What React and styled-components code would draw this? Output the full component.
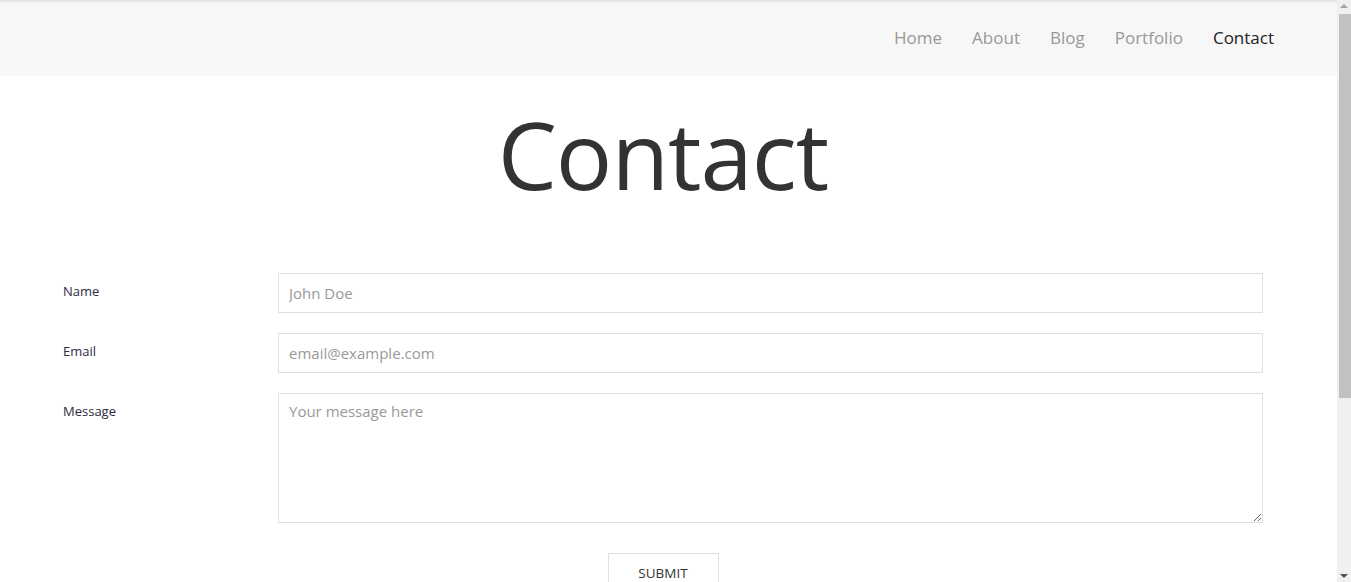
import React from "react";
import styled, { createGlobalStyle } from "styled-components";

const Global = createGlobalStyle`
  html, body { margin: 0; padding: 0; background: #fff; }
  body { font-family: "Open Sans", "Noto Sans", sans-serif; color: #333; padding-right: 14px; }
  * { box-sizing: border-box; }
`;

const Scrollbar = styled.div`
  position: fixed;
  top: 0;
  right: 0;
  bottom: 0;
  width: 14px;
  background: #f0f0f0;
  display: flex;
  flex-direction: column;
  align-items: stretch;
`;

const Arrow = styled.div`
  height: 12px;
  display: flex;
  align-items: center;
  justify-content: center;
  &::before {
    content: "";
    border-left: 4px solid transparent;
    border-right: 4px solid transparent;
    ${(p) =>
      p.$down
        ? "border-top: 4px solid #505050;"
        : "border-bottom: 4px solid #a3a3a3;"}
  }
`;

const Thumb = styled.div`
  margin: 2px 0 0 2px;
  height: 384px;
  background: #c1c1c1;
`;

const Track = styled.div`
  flex: 1;
`;

const NavBar = styled.header`
  height: 76px;
  background: #f7f7f7;
  border-top: 2px solid #e6e6e6;
  display: flex;
  align-items: center;
  justify-content: flex-end;
  padding: 0 63px 3px 0;
`;

const NavList = styled.nav`
  display: flex;
  gap: 30px;
`;

const NavLink = styled.a`
  font-size: 17px;
  color: ${(p) => (p.$active ? "#222" : "#999")};
  text-decoration: none;
  cursor: pointer;
`;

const Main = styled.main`
  padding: 0 74px 60px 63px;
`;

const Title = styled.h1`
  margin: 22px 0 62px;
  text-align: center;
  font-size: 94px;
  font-weight: 400;
  line-height: 1.2;
  color: #333;
  letter-spacing: -1px;
`;

const Form = styled.form`
  display: flex;
  flex-direction: column;
  gap: 20px;
`;

const Row = styled.div`
  display: grid;
  grid-template-columns: 215px 1fr;
  align-items: start;
`;

const Label = styled.label`
  font-size: 13px;
  color: #2d2a3e;
  padding-top: 9px;
`;

const Input = styled.input`
  width: 100%;
  height: 40px;
  border: 1px solid #e0e0e0;
  padding: 0 10px;
  font-family: inherit;
  font-size: 15px;
  color: #333;
  outline: none;
  &::placeholder { color: #999; }
`;

const TextArea = styled.textarea`
  width: 100%;
  height: 130px;
  border: 1px solid #e0e0e0;
  padding: 7px 10px;
  font-family: inherit;
  font-size: 15px;
  color: #333;
  outline: none;
  display: block;
  resize: both;
  &::placeholder { color: #999; }
`;

const Actions = styled.div`
  display: flex;
  justify-content: center;
  margin-top: 10px;
`;

const Submit = styled.button`
  width: 111px;
  height: 40px;
  background: #fff;
  border: 1px solid #e0e0e0;
  font-family: inherit;
  font-size: 13.5px;
  color: #333;
  text-transform: uppercase;
  padding: 0;
  cursor: pointer;
`;

export default function App() {
  return (
    <>
      <Global />
      <NavBar>
        <NavList>
          <NavLink>Home</NavLink>
          <NavLink>About</NavLink>
          <NavLink>Blog</NavLink>
          <NavLink>Portfolio</NavLink>
          <NavLink $active>Contact</NavLink>
        </NavList>
      </NavBar>
      <Main>
        <Title>Contact</Title>
        <Form onSubmit={(e) => e.preventDefault()}>
          <Row>
            <Label htmlFor="name">Name</Label>
            <Input id="name" placeholder="John Doe" />
          </Row>
          <Row>
            <Label htmlFor="email">Email</Label>
            <Input id="email" placeholder="email@example.com" />
          </Row>
          <Row>
            <Label htmlFor="message">Message</Label>
            <TextArea id="message" placeholder="Your message here" />
          </Row>
          <Actions>
            <Submit type="submit">Submit</Submit>
          </Actions>
        </Form>
      </Main>
      <Scrollbar aria-hidden="true">
        <Arrow />
        <Thumb />
        <Track />
        <Arrow $down />
      </Scrollbar>
    </>
  );
}
